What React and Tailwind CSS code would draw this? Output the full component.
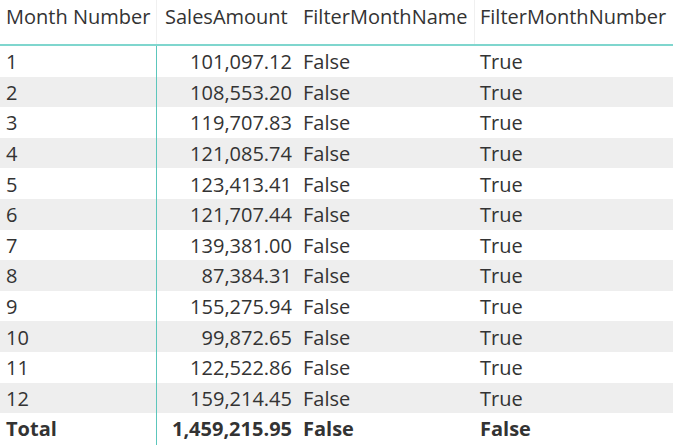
import React from 'react';

const rows = [
  ['1', '101,097.12'],
  ['2', '108,553.20'],
  ['3', '119,707.83'],
  ['4', '121,085.74'],
  ['5', '123,413.41'],
  ['6', '121,707.44'],
  ['7', '139,381.00'],
  ['8', '87,384.31'],
  ['9', '155,275.94'],
  ['10', '99,872.65'],
  ['11', '122,522.86'],
  ['12', '159,214.45'],
];

const App = () => {
  return (
    <div
      className="w-[673px] bg-white text-[20px] text-[#333333]"
      style={{ fontFamily: '"Open Sans", "Noto Sans", sans-serif' }}
    >
      {/* Header */}
      <div className="grid grid-cols-[157px_141px_177px_198px] h-[46px] border-b-2 border-[#7fd6ce] leading-[28px]">
        <div className="pl-[6px] pt-[3px] border-r border-[#f0f0f0]">Month Number</div>
        <div className="pl-[8px] pt-[3px]">SalesAmount</div>
        <div className="pl-[5px] pt-[3px] border-r border-[#f0f0f0]">FilterMonthName</div>
        <div className="pl-[5px] pt-[3px]">FilterMonthNumber</div>
      </div>

      {/* Rows */}
      {rows.map(([month, amount], i) => (
        <div
          key={month}
          className={`grid grid-cols-[157px_141px_177px_198px] h-[30.6px] items-center leading-[28px] ${i % 2 === 1 ? 'bg-[#eeeeee]' : 'bg-white'}`}
        >
          <div className="pl-[6px] pt-[2px] h-full flex items-center border-r border-[#5cc6bc]">{month}</div>
          <div className="pr-[6px] pt-[2px] text-right">{amount}</div>
          <div className="pl-[5px] pt-[2px]">False</div>
          <div className="pl-[5px] pt-[2px]">True</div>
        </div>
      ))}

      {/* Total */}
      <div className="grid grid-cols-[157px_141px_177px_198px] h-[32px] items-center font-bold leading-[28px]">
        <div className="pl-[6px] h-full flex items-center border-r border-[#5cc6bc]">Total</div>
        <div className="pr-[6px] text-right">1,459,215.95</div>
        <div className="pl-[5px]">False</div>
        <div className="pl-[5px]">False</div>
      </div>
    </div>
  );
};

export default App;
